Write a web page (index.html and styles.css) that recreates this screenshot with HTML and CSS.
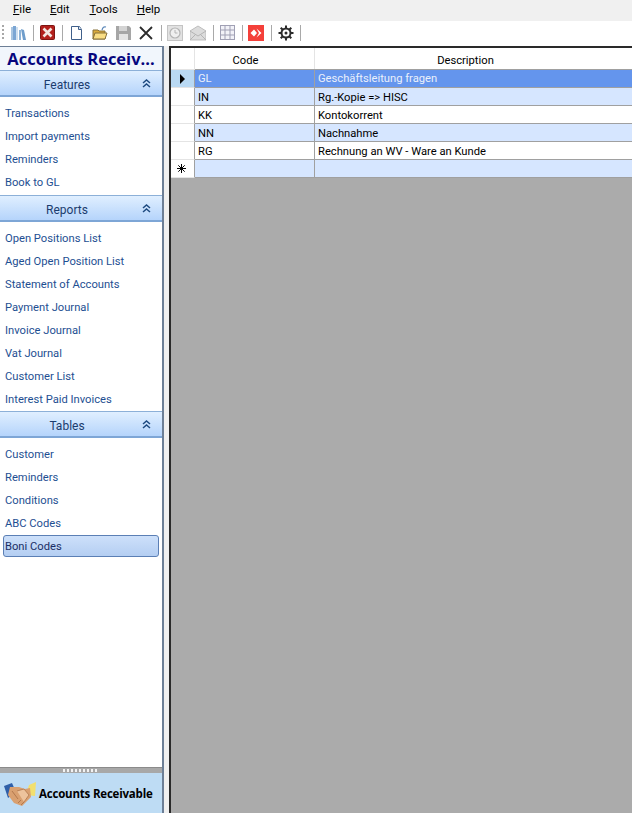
FILE: index.html
```html
<!DOCTYPE html>
<html>
<head>
<meta charset="utf-8">
<title>Accounts Receivable</title>
<link rel="stylesheet" href="styles.css">
</head>
<body>
<nav class="menubar">
  <span class="menu"><u>F</u>ile</span>
  <span class="menu"><u>E</u>dit</span>
  <span class="menu"><u>T</u>ools</span>
  <span class="menu"><u>H</u>elp</span>
</nav>
<div class="toolbar">
  <span class="grip"></span>
  <svg class="ic" viewBox="0 0 16 16"><path d="M0 2h2v13H0z" fill="#a9c6e2"/><path d="M2 1h3v14H2z" fill="#7ba6d4"/><path d="M5 2h2v13H5z" fill="#cfe0f0"/><path d="M8 5h2v10H8z" fill="#8fb4d8"/><path d="M10 4l3 1 2 10h-3z" fill="#6f9dcb"/></svg>
  <span class="sep"></span>
  <svg class="ic" viewBox="0 0 16 16"><rect x=".5" y=".5" width="14" height="14" rx="1" fill="#b3201c" stroke="#7d1512"/><path d="M3.500 3.500l8 8M11.500 3.500l-8 8" stroke="#f3e6e0" stroke-width="2.600"/></svg>
  <span class="sep"></span>
  <svg class="ic" viewBox="0 0 16 16"><path d="M2.500 1.500h8l2 3v10h-10z" fill="#fff" stroke="#3f5f8a"/><path d="M9.500 1.500v3h3" fill="#dfe8f2" stroke="#3f5f8a"/></svg>
  <svg class="ic gap" viewBox="0 0 16 16"><path d="M1 5h5l1 1h6v8H1z" fill="#d9a93c" stroke="#86703a"/><path d="M3 8h12l-2 6H1z" fill="#f9dd84" stroke="#86703a"/><path d="M10 5q1-4 4-3" fill="none" stroke="#5b87b8" stroke-width="1.200"/></svg>
  <svg class="ic gap-wide" viewBox="0 0 16 16"><path d="M0 1h13l2 2v12H0z" fill="#a6a6a6"/><path d="M3 1h8v5H3z" fill="#d4d4d4"/><path d="M3 9h9v6H3z" fill="#e4e4e4"/></svg>
  <svg class="ic gap" viewBox="0 0 16 16"><path d="M1 2l12 12M13 2L1 14" stroke="#2b2b2b" stroke-width="1.800"/></svg>
  <span class="sep"></span>
  <svg class="ic tight" viewBox="0 0 16 16"><rect x=".5" y=".5" width="15" height="15" fill="#e2e2e2" stroke="#c4c4c4"/><circle cx="8" cy="8" r="5" fill="#efefef" stroke="#b4b4b4" stroke-width="1.200"/><path d="M8 5v3h2.500" fill="none" stroke="#b4b4b4"/></svg>
  <svg class="ic gap" viewBox="0 0 16 16"><path d="M0 6l8-5 8 5v9H0z" fill="#dcdcdc" stroke="#bdbdbd"/><path d="M0 6l8 5 8-5M0 15l6-6M16 15l-6-6" fill="none" stroke="#b4b4b4"/></svg>
  <span class="sep sep-wide"></span>
  <svg class="ic" viewBox="0 0 16 16"><rect x=".5" y=".5" width="14" height="14" fill="#f2f2f8" stroke="#a0a0b4"/><path d="M.5 5h14M.5 10h14M5 .5v14M10 .5v14" stroke="#a0a0b4"/></svg>
  <span class="sep"></span>
  <svg class="ic tight" viewBox="0 0 16 16"><rect width="16" height="16" fill="#f4403a"/><path d="M2.500 8L6 4.500 9 8l-3 3.500zM8.500 3.500L13.500 8l-5 4.500L11 8z" fill="#fff"/></svg>
  <span class="sep sep-wide"></span>
  <svg class="ic" viewBox="0 0 16 16"><circle cx="8" cy="8" r="4.500" fill="none" stroke="#2b2b2b" stroke-width="2"/><circle cx="8" cy="8" r="1.500" fill="#2b2b2b"/><path d="M8 .5v3M8 12.500v3M.5 8h3M12.500 8h3M2.700 2.700l2.100 2.100M11.200 11.200l2.100 2.100M13.300 2.700l-2.100 2.100M4.800 11.200l-2.100 2.100" stroke="#2b2b2b" stroke-width="2"/></svg>
  <span class="sep"></span>
</div>
<main class="workspace">
  <aside class="sidebar">
    <h1 class="title">Accounts Receiv...</h1>
    <div class="groups">
      <section class="group">
        <header class="group-head">Features<svg class="chev" viewBox="0 0 9 9"><path d="M1 4l3.500-3L8 4M1 8l3.500-3L8 8" fill="none" stroke="#1d4a80" stroke-width="1.500"/></svg></header>
        <ul class="items">
          <li>Transactions</li><li>Import payments</li><li>Reminders</li><li>Book to GL</li>
        </ul>
      </section>
      <section class="group">
        <header class="group-head">Reports<svg class="chev" viewBox="0 0 9 9"><path d="M1 4l3.500-3L8 4M1 8l3.500-3L8 8" fill="none" stroke="#1d4a80" stroke-width="1.500"/></svg></header>
        <ul class="items">
          <li>Open Positions List</li><li>Aged Open Position List</li><li>Statement of Accounts</li><li>Payment Journal</li><li>Invoice Journal</li><li>Vat Journal</li><li>Customer List</li><li>Interest Paid Invoices</li>
        </ul>
      </section>
      <section class="group">
        <header class="group-head">Tables<svg class="chev" viewBox="0 0 9 9"><path d="M1 4l3.500-3L8 4M1 8l3.500-3L8 8" fill="none" stroke="#1d4a80" stroke-width="1.500"/></svg></header>
        <ul class="items">
          <li>Customer</li><li>Reminders</li><li>Conditions</li><li>ABC Codes</li><li class="active">Boni Codes</li>
        </ul>
      </section>
    </div>
    <div class="nav-split"><span class="dots"></span></div>
    <div class="nav-button">
      <svg class="hands" viewBox="0 0 32 24"><path d="M0 4l8-3 4 9-8 6z" fill="#2f5fa8"/><path d="M32 0l-7 3-3 10 9 1z" fill="#f2df6e"/><path d="M6 5h9l6 2 5-1 1 9-9 9-8-3-6-8z" fill="#d9a070"/><path d="M13 9l7-2 5 6-5 7" fill="#edc39c" stroke="#a86f45" stroke-width=".7"/><path d="M8 9l6 8M14 21l3-3M17 23l3-3" stroke="#a86f45" stroke-width=".8" fill="none"/></svg>
      <span class="nav-label">Accounts Receivable</span>
    </div>
  </aside>
  <section class="content">
    <div class="grid">
      <div class="row head"><span class="rh"></span><span class="code">Code</span><span class="desc">Description</span></div>
      <div class="row selected"><span class="rh"><i class="arrow"></i></span><span class="code">GL</span><span class="desc">Geschäftsleitung fragen</span></div>
      <div class="row alt"><span class="rh"></span><span class="code">IN</span><span class="desc">Rg.-Kopie =&gt; HISC</span></div>
      <div class="row"><span class="rh"></span><span class="code">KK</span><span class="desc">Kontokorrent</span></div>
      <div class="row alt"><span class="rh"></span><span class="code">NN</span><span class="desc">Nachnahme</span></div>
      <div class="row"><span class="rh"></span><span class="code">RG</span><span class="desc">Rechnung an WV - Ware an Kunde</span></div>
      <div class="row alt"><span class="rh"><svg class="star" viewBox="0 0 9 9"><path d="M4.500 0v9M0 4.500h9M1.300 1.300l6.400 6.400M7.700 1.300L1.300 7.700" stroke="#000" stroke-width="1"/></svg></span><span class="code"></span><span class="desc"></span></div>
    </div>
  </section>
</main>
</body>
</html>
```
FILE: styles.css
```css
* { box-sizing: border-box; }
html, body { height: 100%; }
body {
  margin: 0;
  height: 813px;
  overflow: hidden;
  display: flex;
  flex-direction: column;
  font: 11.200px Roboto, "Open Sans", sans-serif;
  background: #f0f0f0;
  color: #000;
}
.menubar {
  height: 21px;
  background: #f0f0f0;
  display: flex;
  align-items: center;
  padding: 0 0 3px 13px;
  font-size: 11.500px;
}
.menu:nth-child(2) { margin-left: 19px; }
.menu:nth-child(3) { margin-left: 20px; }
.menu:nth-child(4) { margin-left: 19px; }
.toolbar {
  height: 25px;
  background: #fff;
  display: flex;
  align-items: center;
  padding: 0 0 1px 2px;
}
.grip {
  width: 2px;
  height: 16px;
  margin-right: 7px;
  background: repeating-linear-gradient(#a8a8a8 0 2px, transparent 2px 4px);
}
.ic { width: 16px; height: 16px; flex: none; }
.gap { margin-left: 7px; }
.gap-wide { margin-left: 8px; }
.tight { margin-left: -1px; }
.sep {
  width: 1px;
  height: 16px;
  background: #a9a9a9;
  margin: 0 6px;
  flex: none;
}
.sep-wide { margin-left: 7px; }
.workspace {
  height: 767px;
  display: flex;
  background: #f0f0f0;
}
.sidebar {
  width: 164px;
  flex: none;
  display: flex;
  flex-direction: column;
  background: #fff;
  border-right: 2px solid #6d7f96;
  border-top: 1px solid #6d7f96;
}
.title {
  margin: 0;
  height: 23px;
  background: #f1f6fc;
  color: #06067e;
  font: 700 16.500px/24px "Open Sans", sans-serif;
  text-align: center;
  white-space: nowrap;
  overflow: hidden;
}
.groups { flex: 1; }
.group-head {
  height: 27px;
  padding: 3px 28px 0 0;
  border-top: 1px solid #8cb0d8;
  border-bottom: 2px solid #7ea6d6;
  background: linear-gradient(#e0efff, #b5d4fb);
  color: #1b3c6e;
  font-size: 12px;
  display: flex;
  align-items: center;
  justify-content: center;
  position: relative;
}
.chev { position: absolute; right: 11px; top: 8px; width: 9px; height: 9px; }
.items {
  list-style: none;
  margin: 0;
  padding: 4px 3px 0;
}
.group:first-child .items { height: 98px; }
.group:nth-child(2) .items { height: 189px; }
.items li {
  height: 23px;
  line-height: 26px;
  padding-left: 2px;
  color: #1e4f92;
  white-space: nowrap;
}
.items li.active {
  height: 22px;
  margin-top: 1px;
  padding-left: 1px;
  border: 1px solid #5b7fb5;
  border-radius: 3px;
  line-height: 21px;
  color: #1b2f66;
  background: linear-gradient(#cde0fa, #b4cef2);
}
.nav-split {
  height: 6px;
  background: #a8a8a8;
  border-top: 1px solid #8b8b8b;
  display: flex;
  justify-content: center;
  align-items: center;
}
.dots {
  width: 36px;
  height: 3px;
  background: repeating-linear-gradient(90deg, #f2f2f2 0 2px, transparent 2px 4px);
}
.nav-button {
  height: 40px;
  background: #bedcf4;
  display: flex;
  align-items: center;
  padding: 1px 0 0 4px;
  gap: 3px;
}
.hands { width: 32px; height: 24px; flex: none; }
.nav-label {
  font: 700 11.500px "Open Sans", sans-serif;
  letter-spacing: -.2px;
  white-space: nowrap;
}
.content {
  flex: 1;
  margin-left: 5px;
  background: #ababab;
  border-top: 2px solid #2a2a2a;
  border-left: 2px solid #2a2a2a;
  overflow: hidden;
}
.row {
  display: flex;
  height: 18px;
  line-height: 20px;
  background: #fff;
  border-bottom: 1px solid #a0a0a0;
}
.row.head { height: 22px; line-height: 26px; }
.row.selected { line-height: 18px; }
.rh {
  width: 24px;
  flex: none;
  background: #fff;
  margin-bottom: -1px;
  border-right: 1px solid #a0a0a0;
  border-bottom: 1px solid #e4e4e4;
  display: flex;
  align-items: center;
  justify-content: center;
}
.code {
  width: 120px;
  flex: none;
  padding-left: 3px;
  border-right: 1px solid #a0a0a0;
}
.desc { flex: 1; padding-left: 3px; white-space: nowrap; }
.head .rh, .head .code { border-right-color: #e4e4e4; }
.head .code, .head .desc { text-align: center; padding: 0; }
.head .code { padding-right: 18px; }
.head .desc { padding-right: 16px; }
.alt { background: #d6e6ff; }
.selected { background: #6495ed; color: #eaf0fb; }
.selected .rh { background: #b9d9f3; }
.arrow {
  width: 0;
  height: 0;
  border-left: 5px solid #000;
  border-top: 5px solid transparent;
  border-bottom: 5px solid transparent;
}
.star { width: 9px; height: 9px; margin-right: 2px; }
```
